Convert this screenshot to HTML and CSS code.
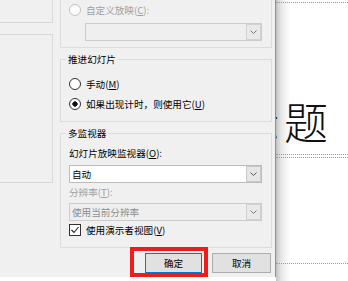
FILE: index.html
```html
<!DOCTYPE html>
<html lang="zh-CN">
<head>
<meta charset="utf-8">
<title>设置放映方式</title>
<link rel="stylesheet" href="styles.css">
</head>
<body>
<div class="screen">
  <div class="dialog">
    <div class="side">
      <div class="side-panel side-panel--top"></div>
      <div class="side-panel side-panel--main"></div>
    </div>
    <div class="main">
      <div class="group group--cut">
        <div class="row row--20 is-disabled"><span class="radio radio--disabled"></span><span>自定义放映(<u>C</u>):</span></div>
        <div class="combo combo--disabled combo--indent"><span class="combo-text"></span><span class="combo-btn"><svg width="7" height="4" viewBox="0 0 7 4"><polyline points="0.5,0.5 3.5,3.5 6.5,0.5" fill="none" stroke="#7a7a7a" stroke-width="1"/></svg></span></div>
      </div>
      <fieldset class="group group--advance">
        <legend class="legend">推进幻灯片</legend>
        <div class="row row--20"><span class="radio"></span><span>手动(<u>M</u>)</span></div>
        <div class="row row--20"><span class="radio radio--checked"></span><span>如果出现计时，则使用它(<u>U</u>)</span></div>
      </fieldset>
      <fieldset class="group group--monitors">
        <legend class="legend">多监视器</legend>
        <div class="label">幻灯片放映监视器(<u>O</u>):</div>
        <div class="combo combo--gap4"><span class="combo-text">自动</span><span class="combo-btn"><svg width="7" height="4" viewBox="0 0 7 4"><polyline points="0.5,0.5 3.5,3.5 6.5,0.5" fill="none" stroke="#555" stroke-width="1"/></svg></span></div>
        <div class="label label--gap1 is-disabled">分辨率(<u>T</u>):</div>
        <div class="combo combo--disabled combo--gap3"><span class="combo-text">使用当前分辨率</span><span class="combo-btn"><svg width="7" height="4" viewBox="0 0 7 4"><polyline points="0.5,0.5 3.5,3.5 6.5,0.5" fill="none" stroke="#7a7a7a" stroke-width="1"/></svg></span></div>
        <div class="row row--16 row--gap1"><span class="check"><svg width="10" height="10" viewBox="0 0 10 10"><polyline points="1.5,5 4,7.5 8.5,2" fill="none" stroke="#222" stroke-width="1.1"/></svg></span><span>使用演示者视图(<u>V</u>)</span></div>
      </fieldset>
      <div class="buttons">
        <button class="btn btn--default">确定<span class="highlight"></span></button>
        <button class="btn btn--cancel">取消</button>
      </div>
    </div>
  </div>
  <div class="slide">
    <div class="title-box"><span class="title-text">标题</span></div>
    <div class="subtitle-box"></div>
  </div>
</div>
</body>
</html>
```
FILE: styles.css
```css
html, body {
  margin: 0;
  padding: 0;
  background: #ffffff;
}
body {
  font-family: "Noto Sans CJK SC", "Microsoft YaHei", sans-serif;
  font-size: 9.6px;
  color: #000;
}
.screen {
  display: flex;
  align-items: flex-start;
  width: 348px;
  height: 281px;
  overflow: hidden;
}
.dialog {
  width: 276px;
  height: 277px;
  flex: none;
  box-sizing: border-box;
  background: #f0f0f0;
  border-right: 1px solid #8f8f8f;
  display: flex;
  gap: 7px;
}
.side {
  width: 54px;
  flex: none;
  margin-left: -1px;
  display: flex;
  flex-direction: column;
}
.side-panel {
  box-sizing: border-box;
  border: 1px solid #d9d9d9;
}
.side-panel--top {
  height: 23px;
  border-top: none;
}
.side-panel--main {
  margin-top: 11px;
  height: 149px;
}
.main {
  width: 212px;
  flex: none;
  display: flex;
  flex-direction: column;
}
.group {
  margin: 0;
  min-width: 0;
  box-sizing: border-box;
  border: 1px solid #dcdcdc;
  padding: 0 9px 0 8px;
}
.group--cut {
  border-top: none;
  padding-bottom: 6px;
}
.group--advance {
  margin-top: 3px;
  padding-top: 7px;
  padding-bottom: 7px;
}
.group--monitors {
  margin-top: 3px;
  padding-top: 4px;
  padding-bottom: 9px;
}
.legend {
  padding: 0 2px;
  margin-left: -3px;
  line-height: 16px;
  height: 16px;
}
.row {
  display: flex;
  align-items: center;
}
.row--20 { height: 20px; }
.row--16 { height: 16px; }
.row--gap1 { margin-top: 1px; }
.label {
  height: 16px;
  line-height: 16px;
}
.label--gap1 { margin-top: 1px; }
.is-disabled { color: #a0a0a0; }
.radio {
  width: 12px;
  height: 12px;
  flex: none;
  box-sizing: border-box;
  border: 1px solid #333;
  border-radius: 50%;
  background: #fff;
  margin-right: 5px;
}
.radio--checked {
  background: radial-gradient(circle, #111 0, #111 2.4px, #fff 2.9px);
}
.radio--disabled {
  border-color: #c2c2c2;
  background: #fcfcfc;
}
.check {
  width: 12px;
  height: 12px;
  flex: none;
  box-sizing: border-box;
  border: 1px solid #333;
  background: #fff;
  margin-right: 5px;
  display: flex;
  align-items: center;
  justify-content: center;
}
.check svg { display: block; }
.combo {
  height: 18px;
  box-sizing: border-box;
  border: 1px solid #bcbcbc;
  background: #fff;
  display: flex;
  align-items: stretch;
  margin-top: 3px;
}
.combo--gap4 { margin-top: 4px; }
.combo--gap3 { margin-top: 3px; }
.combo--indent { margin-left: 16px; }
.combo--disabled {
  background: #efefef;
  border-color: #cccccc;
  color: #8e8e8e;
}
.combo-text {
  flex: 1;
  padding-left: 2px;
  line-height: 16px;
}
.combo-btn {
  width: 15px;
  flex: none;
  box-sizing: border-box;
  border: 1px solid #cacaca;
  background: #e6e6e6;
  display: flex;
  align-items: center;
  justify-content: center;
}
.combo--disabled .combo-btn {
  background: #e9e9e9;
  border-color: #d2d2d2;
}
.combo-btn svg { display: block; }
.buttons {
  margin-top: 5px;
  padding-right: 1px;
  display: flex;
  justify-content: flex-end;
  gap: 10px;
}
.btn {
  height: 20px;
  box-sizing: border-box;
  padding: 0;
  margin: 0;
  border: 1px solid #adadad;
  background: #e1e1e1;
  font-family: inherit;
  font-size: 9.6px;
  color: #000;
  line-height: 18px;
}
.btn--default {
  width: 57px;
  border-color: #0078d7;
  position: relative;
}
.btn--cancel {
  width: 59px;
}
.highlight {
  position: absolute;
  left: -16px;
  top: -7px;
  width: 78px;
  height: 30px;
  box-sizing: border-box;
  border: 4px solid #ee1c1c;
}
.slide {
  flex: 1;
  height: 281px;
  overflow: hidden;
  background: linear-gradient(90deg, #c2c2c2 0, #e6e6e6 5px, #ffffff 14px);
  display: flex;
  flex-direction: column;
}
.title-box {
  margin-top: 2px;
  height: 153px;
  box-sizing: border-box;
  border-top: 1px dotted #9a9a9a;
  border-bottom: 1px dotted #9a9a9a;
  display: flex;
  align-items: flex-end;
  padding-bottom: 11px;
}
.title-text {
  margin-left: -41px;
  font-size: 44px;
  line-height: 1;
  font-weight: 300;
  letter-spacing: 5px;
  white-space: nowrap;
  color: #111;
}
.subtitle-box {
  margin-top: 2px;
  height: 107px;
  box-sizing: border-box;
  border-top: 1px dotted #9a9a9a;
  border-bottom: 1px dotted #9a9a9a;
}
```
